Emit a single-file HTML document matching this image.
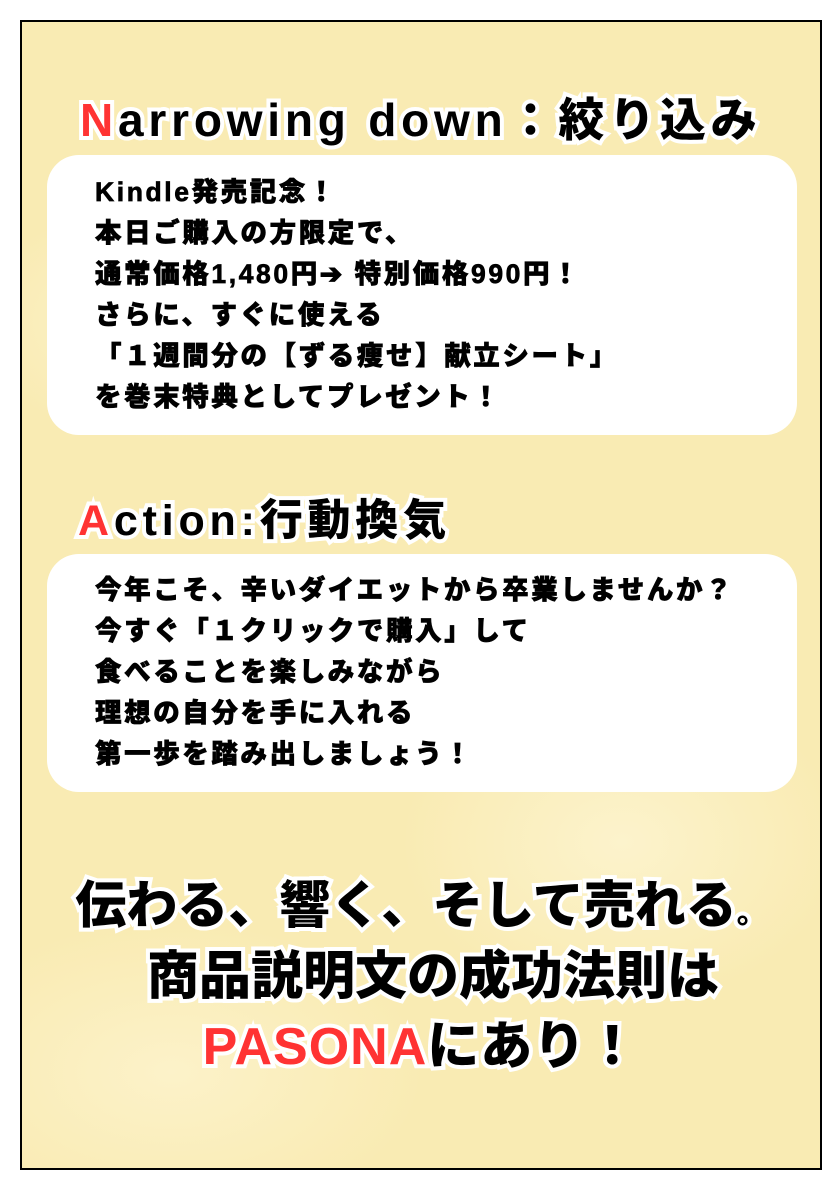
<!DOCTYPE html>
<html><head><meta charset="utf-8"><style>
body{margin:0;width:840px;height:1188px;background:#fff;position:relative;overflow:hidden;font-family:"Liberation Sans","Noto Sans CJK JP",sans-serif;font-weight:bold}
.frame{position:absolute;left:20px;top:20px;width:798px;height:1146px;border:2px solid #000;background:
radial-gradient(ellipse 200px 120px at 150px 300px,#fcf3cc,transparent),
radial-gradient(ellipse 220px 160px at 600px 820px,#fcf3cc,transparent),
radial-gradient(ellipse 250px 150px at 150px 1050px,#fcf2c9,transparent),
#f9ebb3;}
.h{position:absolute;font-weight:900;color:#000;white-space:nowrap;paint-order:stroke fill;-webkit-text-stroke:8px #fff;text-shadow:0 0 2px #fff}
.r{color:#f33}
.box{position:absolute;left:25px;width:750px;background:#fff;border-radius:32px}
.t{position:absolute;left:73px;font-size:26.5px;letter-spacing:2.6px;line-height:41px;color:#000;white-space:nowrap;font-weight:900;-webkit-text-stroke:0.7px #000}
.c{left:0;width:798px;text-align:center;font-size:52px}
</style></head><body>
<div class="frame">
<div class="h" style="left:58px;top:62px;font-size:46px;letter-spacing:4.8px"><span class="r">N</span>arrowing down：絞り込み</div>
<div class="box" style="top:133px;height:280px"></div>
<div class="t" style="top:150px">Kindle発売記念！<br>本日ご購入の方限定で、<br>通常価格1,480円➔ 特別価格990円！<br>さらに、すぐに使える<br>「１週間分の【ずる痩せ】献立シート」<br>を巻末特典としてプレゼント！</div>
<div class="h" style="left:56px;top:464px;font-size:43px;letter-spacing:4.8px"><span class="r">A</span>ction:行動換気</div>
<div class="box" style="top:532px;height:238px"></div>
<div class="t" style="top:548px">今年こそ、辛いダイエットから卒業しませんか？<br>今すぐ「１クリックで購入」して<br>食べることを楽しみながら<br>理想の自分を手に入れる<br>第一歩を踏み出しましょう！</div>
<div class="h c" style="top:842px;left:0px;font-size:51px">伝わる、響く、そして売れる<span style="font-size:30px">。</span></div>
<div class="h c" style="top:912px;left:12px">商品説明文の成功法則は</div>
<div class="h c" style="top:982px;left:0px;letter-spacing:1px"><span class="r">PASONA</span>にあり！</div>
</div>
</body></html>
